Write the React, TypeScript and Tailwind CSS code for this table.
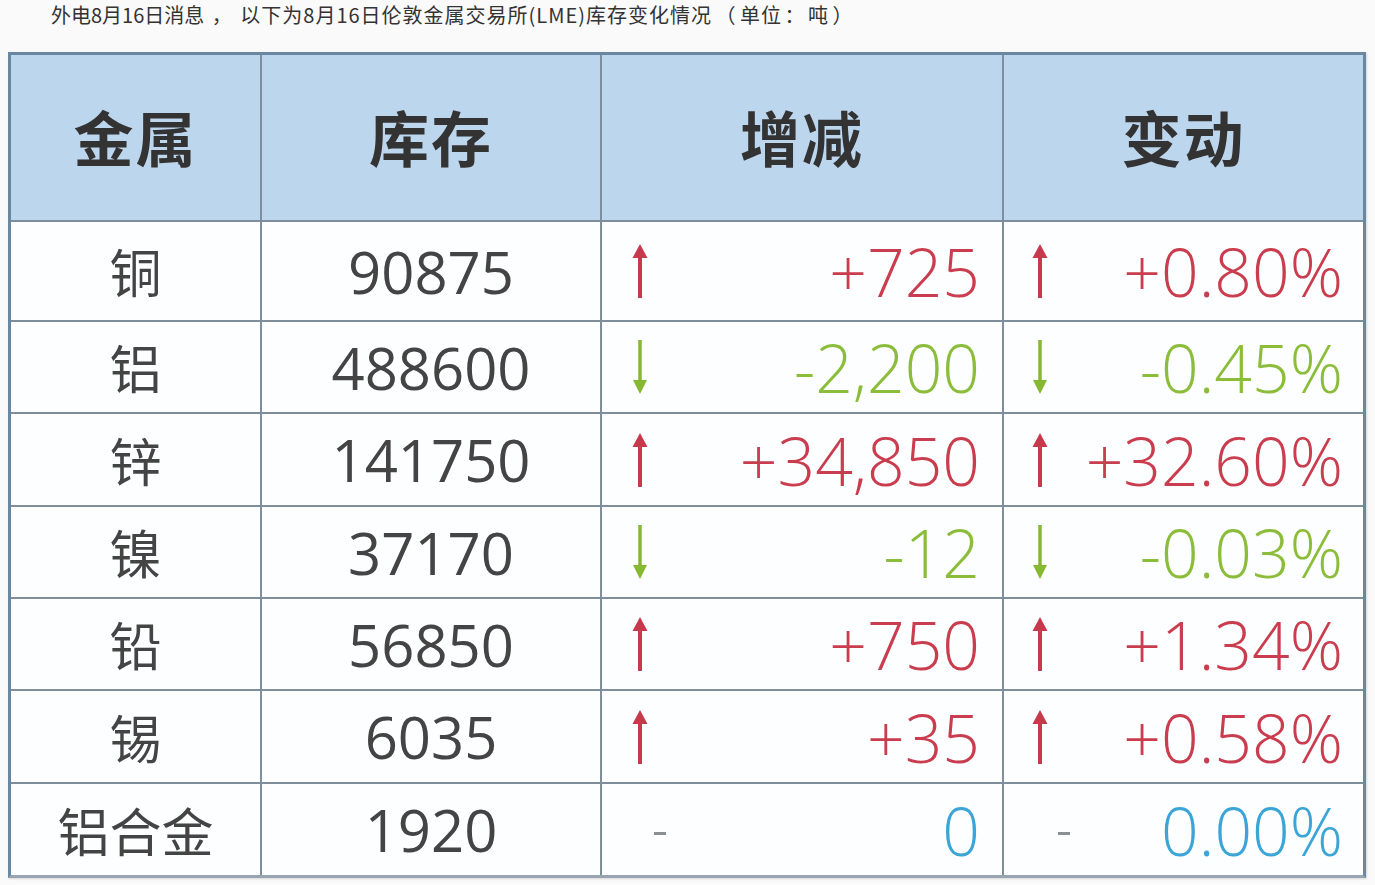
import React from "react";

type Dir = "up" | "down" | "flat";

const rows: { name: string; stock: string; delta: string; pct: string; dir: Dir }[] = [
  { name: "铜", stock: "90875", delta: "+725", pct: "+0.80%", dir: "up" },
  { name: "铝", stock: "488600", delta: "-2,200", pct: "-0.45%", dir: "down" },
  { name: "锌", stock: "141750", delta: "+34,850", pct: "+32.60%", dir: "up" },
  { name: "镍", stock: "37170", delta: "-12", pct: "-0.03%", dir: "down" },
  { name: "铅", stock: "56850", delta: "+750", pct: "+1.34%", dir: "up" },
  { name: "锡", stock: "6035", delta: "+35", pct: "+0.58%", dir: "up" },
  { name: "铝合金", stock: "1920", delta: "0", pct: "0.00%", dir: "flat" },
];

const colorOf: Record<Dir, string> = {
  up: "text-[#c93d4e]",
  down: "text-[#8bbd3a]",
  flat: "text-[#3aa5d6]",
};

function Arrow({ dir, dashOffset }: { dir: Dir; dashOffset: string }) {
  if (dir === "flat") {
    return <span className={`block w-[12px] h-[3px] bg-[#8a8f96] mt-[8px] ${dashOffset}`} />;
  }
  const up = dir === "up";
  return (
    <svg width="20" height="56" viewBox="0 0 20 56" className={up ? "text-[#c63a4c]" : "text-[#86b832]"}>
      {up ? (
        <>
          <path d="M10 8 L10 55" stroke="currentColor" strokeWidth="4" />
          <path d="M10 1 L2.5 15 L17.5 15 Z" fill="currentColor" />
        </>
      ) : (
        <>
          <path d="M10 1 L10 46" stroke="currentColor" strokeWidth="3.5" />
          <path d="M10 55 L3 41 L17 41 Z" fill="currentColor" />
        </>
      )}
    </svg>
  );
}

const cjk = "font-['Noto_Sans_CJK_SC','Noto_Sans',sans-serif]";
const num = "font-['Open_Sans','Noto_Sans_CJK_SC',sans-serif]";

export default function App() {
  return (
    <div className={`min-h-[885px] bg-[#fafafa] ${cjk}`}>
      <p className="pl-[51px] h-[52px] text-[20px] leading-[30px] tracking-[1px] text-[#333]">
        <span className="tracking-normal">外电8月16日消息</span>
        <span className="inline-block w-[36px] text-center">，</span>以下为8月16日伦敦金属交易所(LME)库存变化情况
        <span className="inline-block w-[28px] text-center">（</span>单位<span className="inline-block w-[26px] text-center">：</span>吨
        <span className="inline-block w-[28px] text-center">）</span>
      </p>
      <div className="ml-[8px] w-[1358px] border-[3px] border-[#6a87a2] border-b-[#98a4b0] shadow-[1px_1px_2px_rgba(0,0,0,0.15)]">
        <div className="grid grid-cols-[249px_338px_400px_359px] grid-rows-[165px_98px_90px_91px_90px_90px_91px_91px] gap-[2px] bg-[#7f8e9d]">
          {["金属", "库存", "增减", "变动"].map((h) => (
            <div key={h} className="bg-[#bcd6ee] flex items-center justify-center pb-[4px] text-[60px] font-bold text-[#333] tracking-[2px]">
              {h}
            </div>
          ))}
          {rows.map((r) => (
            <React.Fragment key={r.name}>
              <div className="bg-[#fdfeff] flex items-center justify-center text-[52px] text-[#444]">{r.name}</div>
              <div className={`bg-[#fdfeff] flex items-center justify-center text-[58px] text-[#444] ${num}`}>{r.stock}</div>
              <div className="bg-[#fdfeff] flex items-center pl-[28px] pr-[22px]">
                <Arrow dir={r.dir} dashOffset="ml-[24px]" />
                <span className={`ml-auto text-[66px] font-light leading-none ${num} ${colorOf[r.dir]}`}>{r.delta}</span>
              </div>
              <div className="bg-[#fdfeff] flex items-center pl-[26px] pr-[20px]">
                <Arrow dir={r.dir} dashOffset="ml-[28px]" />
                <span className={`ml-auto text-[66px] font-light leading-none ${num} ${colorOf[r.dir]}`}>{r.pct}</span>
              </div>
            </React.Fragment>
          ))}
        </div>
      </div>
    </div>
  );
}
